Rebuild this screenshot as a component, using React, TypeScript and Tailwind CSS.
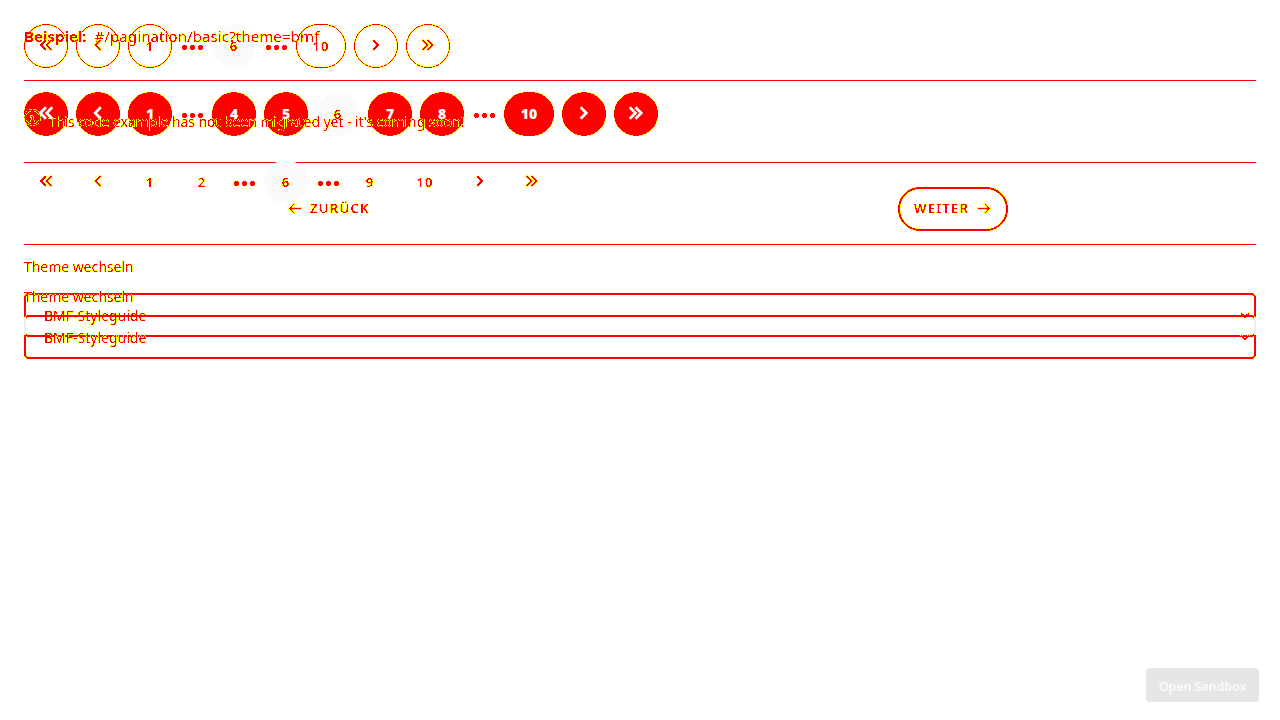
import React from "react";

const Edge = () => (
  <svg className="absolute h-0 w-0" aria-hidden="true">
    <filter id="edge" x="-5%" y="-20%" width="110%" height="140%" colorInterpolationFilters="sRGB">
      <feColorMatrix values="0 0 0 0 1  0 0 0 -1 1  0 0 0 0 0  0 0 0 1 0" />
      <feComponentTransfer>
        <feFuncG type="discrete" tableValues="0 0 0 0 1 1 1 1 1 1" />
        <feFuncA type="discrete" tableValues="0 1 1 1 1 1 1 1 1 1 1 1" />
      </feComponentTransfer>
    </filter>
  </svg>
);

type Kind = "outline" | "solid" | "plain";

function Chevron({ name, bold }: { name: string; bold?: boolean }) {
  const d: Record<string, string> = {
    "«": "M7 2 2 7l5 5M12.5 2 7.5 7l5 5",
    "‹": "M9.5 2 4.5 7l5 5",
    "›": "M4 2l5 5-5 5",
    "»": "M1.5 2l5 5-5 5M6.5 2l5 5-5 5",
  };
  return (
    <svg
      className={bold ? "-mt-0.5 h-4 w-4" : "-mt-0.5 h-3.5 w-3.5"}
      viewBox="0 0 14 14"
      fill="none"
      stroke="currentColor"
      strokeWidth={bold ? 2.4 : name === "‹" ? 1.4 : 1.9}
    >
      <path d={d[name]} />
    </svg>
  );
}

function Item({ label, kind, current }: { label: string; kind: Kind; current?: boolean }) {
  if (label === "…")
    return (
      <span className="flex h-11 w-6 items-center justify-center gap-[3px] pt-[3px] text-[red] [filter:url(#edge)]">
        <i className="h-[5px] w-[5px] rounded-full bg-current" />
        <i className="h-[5px] w-[5px] rounded-full bg-current" />
        <i className="h-[5px] w-[5px] rounded-full bg-current" />
      </span>
    );
  const arrow = "«‹›»".includes(label);
  const width = label === "10" ? "w-[50px]" : "w-11";
  const solid = kind === "solid" && !current;
  const content = arrow ? <Chevron name={label} bold={solid} /> : label;
  return (
    <span className={`grid h-11 place-items-center text-[13px] font-bold ${width} ${current ? "rounded-full bg-[#fafafa]" : ""}`}>
      {!current && kind !== "plain" && (
        <span
          className={`col-start-1 row-start-1 h-full w-full rounded-full [filter:url(#edge)] ${solid ? "bg-[red]" : "border-[1.5px] border-[red]"}`}
        />
      )}
      <span
        className={`z-10 col-start-1 row-start-1 ${solid ? "text-[14px] font-black text-white" : "font-semibold tracking-[1px] text-[red] [filter:url(#edge)]"} ${solid && !arrow ? "pb-0.5" : ""} ${!arrow && !solid ? "pt-px" : ""}`}
      >
        {content}
      </span>
    </span>
  );
}

function Pagination({ items, kind }: { items: string[]; kind: Kind }) {
  return (
    <nav className="flex gap-2">
      {items.map((l, i) => (
        <Item key={i} label={l} kind={kind} current={l === "6"} />
      ))}
    </nav>
  );
}

function Arrow({ left }: { left?: boolean }) {
  return (
    <svg className="h-3.5 w-3.5" viewBox="0 0 14 14" fill="none" stroke="currentColor" strokeWidth="1.4">
      <path d={left ? "M13.5 6.5H1.5M6.5 1.5l-5 5 5 5" : "M.5 6.5h12M7.5 1.5l5 5-5 5"} />
    </svg>
  );
}

function Select({ children }: { children?: React.ReactNode }) {
  return (
    <div className="relative">
      <div className="flex h-11 items-center justify-between rounded-[5px] border-2 border-[red] pr-1 pl-[18px] text-[14px] text-[red] [filter:url(#edge)]">
        <span>BMF-Styleguide</span>
        <svg className="h-2 w-[10px]" viewBox="0 0 10 8" fill="none" stroke="currentColor" strokeWidth="1.7">
          <path d="M1 2l4 4 4-4" />
        </svg>
      </div>
      {children}
    </div>
  );
}

export default function App() {
  return (
    <main className="grid h-[720px] w-[1280px] grid-cols-1 grid-rows-1 overflow-hidden bg-white font-['Noto_Sans',sans-serif] text-[red]">
      <Edge />
      <section className="col-start-1 row-start-1 flex flex-col px-6 pt-6">
        <Pagination kind="outline" items={["«", "‹", "1", "…", "6", "…", "10", "›", "»"]} />
        <hr className="mt-3 border-[red]" />
        <div className="mt-[11px]">
          <Pagination kind="solid" items={["«", "‹", "1", "…", "4", "5", "6", "7", "8", "…", "10", "›", "»"]} />
        </div>
        <hr className="mt-[26px] border-[red]" />
        <div className="-mt-[3px]">
          <Pagination kind="plain" items={["«", "‹", "1", "2", "…", "6", "…", "9", "10", "›", "»"]} />
        </div>
        <hr className="mt-10 border-[red]" />
        <p className="mt-3 text-[14px] leading-5 tracking-[-0.05px] [filter:url(#edge)]">Theme wechseln</p>
        <div className="mt-4">
          <Select />
        </div>
      </section>
      <section className="col-start-1 row-start-1 flex flex-col px-6 pt-[25px]">
        <p className="flex gap-2 text-[15px] leading-[22px] [filter:url(#edge)]">
          <b>Beispiel:</b>
          <span className="tracking-[0.1px]">#/pagination/basic?theme=bmf</span>
        </p>
        <p className="mt-[59px] flex items-center gap-[7px] text-[14px] leading-8 [filter:url(#edge)]">
          <svg className="mb-2.5 h-[17px] w-[17px]" viewBox="0 0 17 17" fill="none" stroke="currentColor" strokeWidth="1.4">
            <circle cx="8.5" cy="8.5" r="7.5" />
            <path d="M8 4v2M6.5 7.5h2V12M6.5 12h4" />
          </svg>
          <span className="tracking-[-0.08px]">This code example has not been migrated yet - it's coming soon!</span>
        </p>
        <div className="mt-[49px] grid h-11 grid-cols-2 items-center text-[13px] font-semibold tracking-[1.3px] [filter:url(#edge)]">
          <span className="ml-[264px] flex h-11 items-center gap-2">
            <Arrow left />
            ZURÜCK
          </span>
          <span className="ml-[258px] flex h-11 w-[110px] items-center gap-2 rounded-full border-2 border-[red] pl-3.5">
            WEITER
            <Arrow />
          </span>
        </div>
        <p className="mt-[56px] text-[14px] leading-5 tracking-[-0.05px] [filter:url(#edge)]">Theme wechseln</p>
        <div className="mt-2">
          <Select>
            <span className="absolute top-0.5 left-0 h-[18px] w-0.5 bg-[#eee]" />
            <span className="absolute top-0.5 right-0 h-[18px] w-0.5 bg-[#eee]" />
          </Select>
        </div>
      </section>
      <section className="col-start-1 row-start-1 flex items-end justify-end pr-[21px] pb-[18px]">
        <button className="h-[34px] w-[113px] rounded-[4px] bg-[#e6e6e6] pt-1 text-[12.4px] font-semibold text-[#fafafa]">Open Sandbox</button>
      </section>
    </main>
  );
}
